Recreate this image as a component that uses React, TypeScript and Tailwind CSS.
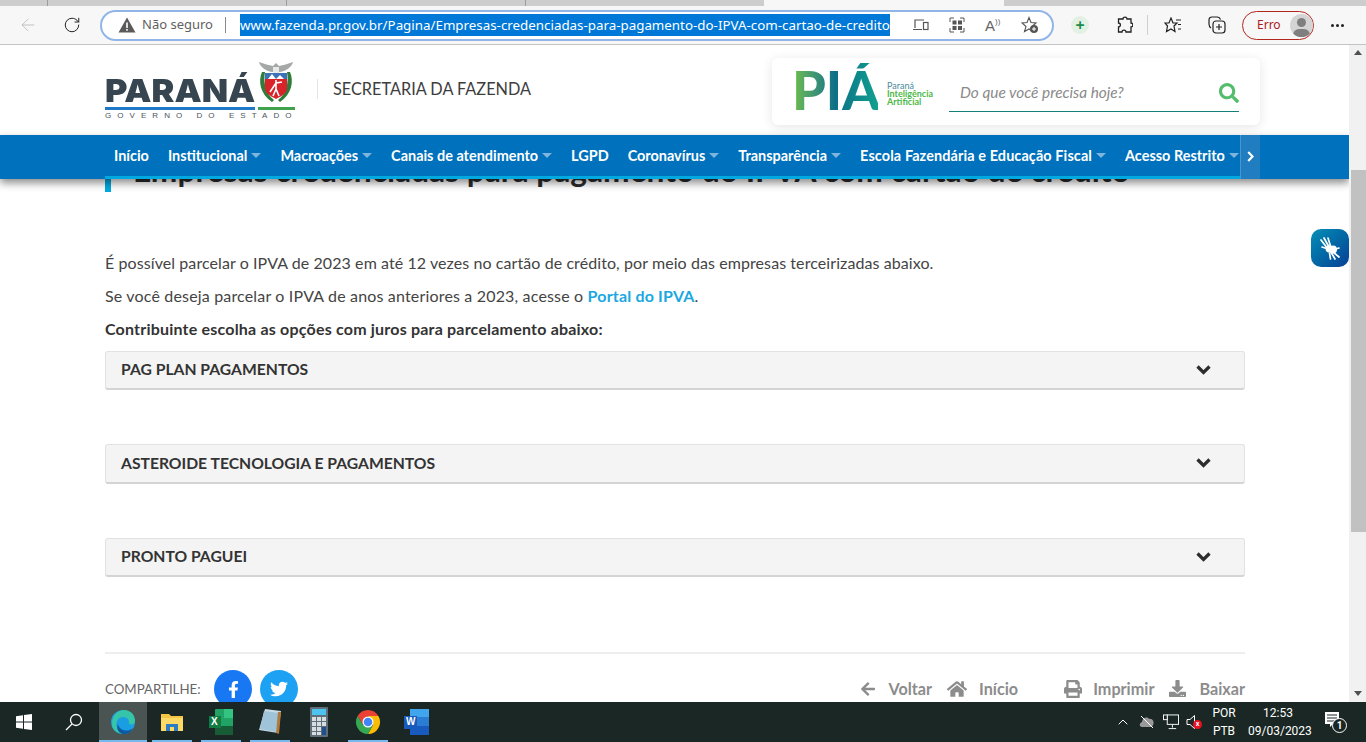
import { ArrowLeft, RotateCw, ChevronUp } from 'lucide-react';
import { FaSearch, FaArrowLeft, FaHome, FaPrint, FaDownload, FaFacebookF, FaTwitter } from 'react-icons/fa';

const navItems = [
  { label: 'Início', caret: false },
  { label: 'Institucional', caret: true },
  { label: 'Macroações', caret: true },
  { label: 'Canais de atendimento', caret: true },
  { label: 'LGPD', caret: false },
  { label: 'Coronavírus', caret: true },
  { label: 'Transparência', caret: true },
  { label: 'Escola Fazendária e Educação Fiscal', caret: true, wide: true },
  { label: 'Acesso Restrito', caret: true },
];

function CoatOfArms() {
  return (
    <svg width="36" height="42" viewBox="0 0 36 42">
      <path d="M1 1 C6 3 11 4 15 5 L18 2 L21 5 C25 4 30 3 35 1 C34 6 28 10 22 11 L14 11 C8 10 2 6 1 1Z" fill="#a4a9a8" />
      <path d="M15 6 H21 V12 H15Z" fill="#e8e8e8" />
      <path d="M4 11 C0 20 2 33 14 41 L16 39 C8 33 5 22 7 11Z" fill="#2f7d3a" />
      <path d="M32 11 C36 20 34 33 22 41 L20 39 C28 33 31 22 29 11Z" fill="#2f7d3a" />
      <path d="M7 12 H29 V27 C29 32 24 35 18 38 C12 35 7 32 7 27Z" fill="#d8232a" />
      <path d="M7 12 H29 V18 H7Z" fill="#3c73b8" />
      <path d="M10 18 L14 13 L18 18 L22 14 L26 18Z" fill="#fff" />
      <path d="M18 19 V28 M18 22 L12 31 M18 22 L24 21 M18 28 L15 35 M18 28 L21 35" stroke="#fff" strokeWidth="1.6" fill="none" />
    </svg>
  );
}

function TabStrip() {
  return (
    <div className="h-[6px] bg-[#cdcdcd] flex shrink-0">
      <div className="w-[48px] border-r border-[#9c9c9c]" />
      <div className="w-[239px] border-r border-[#9c9c9c]" />
      <div className="w-[239px] border-r border-[#9c9c9c]" />
      <div className="w-[238px] rounded-br-md" />
      <div className="w-[240px] bg-[#f7f7f7]" />
      <div className="flex-1 rounded-bl-md" />
    </div>
  );
}

function Toolbar() {
  return (
    <div className="h-[39px] bg-[#f7f7f7] border-b border-[#c4c4c4] flex items-center shrink-0 text-[#1f1f1f]">
      <div className="w-[56px] flex justify-center">
        <ArrowLeft size={20} strokeWidth={1} className="text-[#b8b8b8]" />
      </div>
      <div className="w-[32px] flex justify-center">
        <RotateCw size={18} strokeWidth={1.3} />
      </div>
      <div className="ml-[12px] w-[954px] h-[31px] rounded-full border-2 border-[#92b5e8] bg-white flex items-center pl-[16px]">
        <svg width="18" height="16" viewBox="0 0 18 16">
          <path d="M9 0.5 L17.5 15.5 H0.5Z" fill="#5a5a5a" />
          <rect x="8.2" y="5.5" width="1.6" height="5.5" fill="#fff" />
          <rect x="8.2" y="12" width="1.6" height="1.7" fill="#fff" />
        </svg>
        <span className="ml-[6px] text-[13px] text-[#5f5f5f] font-['Noto_Sans',sans-serif]">Não seguro</span>
        <div className="ml-[12px] w-px h-[16px] bg-[#8a8a8a]" />
        <span className="ml-[14px] h-[22px] w-[650px] bg-[#0078d7] text-white text-[13.35px] leading-[22px] whitespace-nowrap overflow-hidden font-['Noto_Sans',sans-serif]">
          www.fazenda.pr.gov.br/Pagina/Empresas-credenciadas-para-pagamento-do-IPVA-com-cartao-de-credito
        </span>
        <div className="ml-[23px] flex items-center gap-[20px] text-[#555]">
          <svg width="16" height="14" viewBox="0 0 16 14" fill="none" stroke="currentColor" strokeWidth="1.2">
            <path d="M2 10 V2 H11 M0 11.5 H9" />
            <rect x="10.5" y="4.5" width="4.5" height="7" />
          </svg>
          <svg width="16" height="16" viewBox="0 0 16 16" fill="currentColor">
            <path d="M1 5 V1 H5 M11 1 H15 V5 M15 11 V15 H11 M5 15 H1 V11" fill="none" stroke="currentColor" />
            <rect x="3.5" y="3.5" width="4" height="4" />
            <rect x="9" y="3.5" width="4" height="4" />
            <rect x="3.5" y="9" width="4" height="4" />
            <rect x="9" y="9" width="4" height="4" />
          </svg>
          <span className="w-[16px] text-[15px] leading-none font-['Liberation_Sans',sans-serif] text-[#666]">
            A<span className="text-[8px] align-top">))</span>
          </span>
          <svg width="18" height="18" viewBox="0 0 18 18" fill="none" stroke="currentColor" strokeWidth="1.1">
            <path d="M8 1.5 L10 6.5 L15 7 L11 10.5 L12 15.5 L8 13 L3.5 15.5 L5 10.5 L1 7 L6 6.5Z" />
            <circle cx="13" cy="13" r="4" fill="#555" stroke="none" />
            <path d="M13 11 V15 M11 13 H15" stroke="#fff" />
          </svg>
        </div>
      </div>
      <div className="ml-[17px] w-[18px] h-[18px] rounded-full bg-[#e3f1e4] flex items-center justify-center text-[#1a8a4a] font-bold text-[16px] leading-none">+</div>
      <svg className="ml-[28px]" width="16" height="18" viewBox="0 0 16 18" fill="none" stroke="#222" strokeWidth="1.3">
        <path d="M6 3 C6 0.5 10 0.5 10 3 H14 V7 C16.5 7 16.5 11 14 11 V16 H9 C9 13.5 5 13.5 5 16 H1.5 V11 C4 11 4 7 1.5 7 V3Z" />
      </svg>
      <div className="ml-[14px] w-px h-[20px] bg-[#cfcfcf]" />
      <svg className="ml-[16px]" width="18" height="17" viewBox="0 0 18 17" fill="none" stroke="#222" strokeWidth="1.2">
        <path d="M7 1 L9 6 H13 L10 9 L11 14.5 L7 12 L2.5 14.5 L3.5 9 L1 6 H5Z" />
        <path d="M12 3 H17 M14 7.5 H17 M14 12 H17" />
      </svg>
      <svg className="ml-[26px]" width="18" height="18" viewBox="0 0 18 18" fill="none" stroke="#222" strokeWidth="1.2">
        <rect x="5" y="5" width="12" height="12" rx="3" />
        <path d="M11 8 V14 M8 11 H14 M3 12 C1.5 11 1 10 1 8 V4 C1 2 2 1 4 1 H9 C11 1 12 2 12.5 3.5" />
      </svg>
      <div className="ml-[16px] w-[72px] h-[29px] rounded-full border border-[#b3261e] flex items-center pl-[14px] gap-[9px]">
        <span className="text-[12px] text-[#a81c1c] font-['Noto_Sans',sans-serif]">Erro</span>
        <div className="relative w-[23px] h-[23px] rounded-full bg-[#d4d4d4] overflow-hidden">
          <div className="absolute left-[7px] top-[4px] w-[9px] h-[9px] rounded-full bg-[#7f7f7f]" />
          <div className="absolute left-[3px] top-[15px] w-[17px] h-[12px] rounded-full bg-[#7f7f7f]" />
        </div>
      </div>
      <div className="ml-[17px] flex gap-[2px]">
        <i className="block w-[3px] h-[3px] rounded-full bg-[#222]" />
        <i className="block w-[3px] h-[3px] rounded-full bg-[#222]" />
        <i className="block w-[3px] h-[3px] rounded-full bg-[#222]" />
      </div>
    </div>
  );
}

function SiteHeader() {
  return (
    <div className="relative z-10 shrink-0">
      <div className="h-[90px] bg-white flex items-start pl-[105px]">
        <div className="w-[192px] h-[76px] mt-[16px] relative">
          <div className="font-['Inter',sans-serif] font-black text-[32px] leading-[32px] text-[#36454f] mt-[14px] whitespace-nowrap scale-x-[1.07] origin-left">
            PARANÁ
          </div>
          <div className="h-[3px] flex gap-[3px]">
            <div className="w-[150px] bg-[#1f78c8]" />
            <div className="w-[37px] bg-[#3fa34d]" />
          </div>
          <div className="text-[8px] leading-[10px] mt-[1px] tracking-[6.05px] text-[#4a555b] whitespace-nowrap font-['Liberation_Sans',sans-serif]">
            GOVERNO DO ESTADO
          </div>
          <div className="absolute left-[153px] top-[0px]">
            <CoatOfArms />
          </div>
        </div>
        <div className="ml-[20px] mt-[34px] h-[20px] border-l border-[#e4e4e4] pl-[15px] text-[16.3px] leading-[20px] text-[#3d3d3d] font-['Lato',sans-serif] whitespace-nowrap">
          SECRETARIA DA FAZENDA
        </div>
        <div className="ml-auto mr-[89px] mt-[13px] w-[488px] h-[67px] bg-white rounded-[6px] shadow-[0_2px_12px_rgba(0,0,0,0.1)] flex items-center pl-[20px]">
          <div className="w-[86px] font-['Lato',sans-serif] font-black text-[54px] leading-[54px] bg-linear-to-r from-[#6fbf44] via-[#0e6f86] to-[#11a08f] bg-clip-text text-transparent whitespace-nowrap mt-[-3px]">
            PIÁ
          </div>
          <div className="ml-[9px] w-[47px] text-[9px] leading-[8px] font-bold font-['Lato',sans-serif] whitespace-nowrap mt-[5px]">
            <div className="text-[#4c8a9c] font-normal">Paraná</div>
            <div className="text-[#4db848]">Inteligência</div>
            <div className="text-[#4db848]">Artificial</div>
          </div>
          <div className="ml-[15px] w-[290px] h-[40px] border-b border-[#157f7a] flex items-center justify-between pt-[3px]">
            <span className="ml-[11px] italic text-[15.4px] text-[#8a8a8a] font-['Lato',sans-serif]">Do que você precisa hoje?</span>
            <FaSearch size={20} className="text-[#54bd6b]" />
          </div>
        </div>
      </div>
      <nav className="h-[44px] bg-[#0071bc] relative shadow-[0_4px_8px_rgba(0,0,0,0.45)] flex pl-[114px]">
        <div className="absolute left-[105px] w-[1135px] bottom-0 h-[3px] bg-[#00a9e0]" />
        <ul className="flex items-center gap-[19px] h-[42px] text-white font-bold text-[14.45px] font-['Lato',sans-serif] whitespace-nowrap w-[1126px]">
          {navItems.map((n) => (
            <li key={n.label} className={n.wide ? 'flex items-center gap-[4px] tracking-[0.1px]' : 'flex items-center gap-[4px]'}>
              {n.label}
              {n.caret && <span className="w-0 h-0 border-x-[5px] border-x-transparent border-t-[5px] border-t-[#7fb5dc]" />}
            </li>
          ))}
        </ul>
        <div className="w-[20px] h-[44px] bg-[#1f7dc0] border-l border-[#4a95cb] flex items-start justify-center pt-[16px]">
          <svg width="7" height="11" viewBox="0 0 7 11" fill="none" stroke="#fff" strokeWidth="2.2">
            <path d="M1.2 1 L5.5 5.5 L1.2 10" />
          </svg>
        </div>
      </nav>
    </div>
  );
}

function AccordionRow({ title, className }: { title: string; className?: string }) {
  return (
    <div className={`rounded-[3px] bg-[#f4f4f4] border border-[#e2e2e2] border-b-2 border-b-[#d4d4d4] flex items-center justify-between pl-[15px] pr-[33px] ${className ?? ''}`}>
      <span className="font-bold text-[15.7px] text-[#333] font-['Lato',sans-serif]">{title}</span>
      <svg width="15" height="10" viewBox="0 0 15 10" fill="none" stroke="#2d2d2d" strokeWidth="3.2" className="mb-[1px]">
        <path d="M1.5 1.5 L7.5 7.5 L13.5 1.5" />
      </svg>
    </div>
  );
}

function Content() {
  return (
    <div className="ml-[105px] w-[1140px] mt-[-17px] font-['Lato',sans-serif]">
      <div className="flex items-start h-[30px]">
        <div className="w-[6px] h-[30px] bg-[#00a9e0]" />
        <h1 className="ml-[22px] mt-[-9px] text-[31.7px] leading-[34px] font-bold text-[#2b2b2b] whitespace-nowrap">
          Empresas credenciadas para pagamento do IPVA com cartão de crédito
        </h1>
      </div>
      <div className="mt-[61px] text-[16px] leading-[20px] text-[#444] flex flex-col gap-[13px]">
        <p className="tracking-[0.08px]">É possível parcelar o IPVA de 2023 em até 12 vezes no cartão de crédito, por meio das empresas terceirizadas abaixo.</p>
        <p className="tracking-[0.17px]">
          Se você deseja parcelar o IPVA de anos anteriores a 2023, acesse o <span className="font-bold text-[#1ba8e0]">Portal do IPVA</span>.
        </p>
        <p className="font-bold text-[#333] tracking-[0.2px]">Contribuinte escolha as opções com juros para parcelamento abaixo:</p>
      </div>
      <AccordionRow title="PAG PLAN PAGAMENTOS" className="mt-[12px] h-[39px]" />
      <AccordionRow title="ASTEROIDE TECNOLOGIA E PAGAMENTOS" className="mt-[54px] h-[40px]" />
      <AccordionRow title="PRONTO PAGUEI" className="mt-[54px] h-[39px]" />
      <div className="mt-[75px] h-[2px] bg-[#eeeeee]" />
      <div className="mt-[16px] flex items-center h-[38px]">
        <span className="w-[95px] mt-[1px] text-[13.3px] text-[#666] whitespace-nowrap">COMPARTILHE:</span>
        <div className="ml-[14px] w-[38px] h-[38px] rounded-full bg-[#1877f2] flex items-center justify-center text-white">
          <FaFacebookF size={17} />
        </div>
        <div className="ml-[8px] w-[38px] h-[38px] rounded-full bg-[#1da1f2] flex items-center justify-center text-white">
          <FaTwitter size={18} />
        </div>
        <div className="ml-auto flex items-center text-[#8c8c8c] font-bold text-[16.2px]">
          <FaArrowLeft size={16} />
          <span className="ml-[12px]">Voltar</span>
          <FaHome size={20} className="ml-[15px]" />
          <span className="ml-[12px]">Início</span>
          <FaPrint size={18} className="ml-[46px]" />
          <span className="ml-[11px]">Imprimir</span>
          <FaDownload size={17} className="ml-[15px]" />
          <span className="ml-[13px]">Baixar</span>
        </div>
      </div>
    </div>
  );
}

function Scrollbar() {
  return (
    <div className="w-[17px] bg-[#f1f1f1] flex flex-col items-center shrink-0">
      <div className="h-[125px] w-full flex justify-center pt-[5px]">
        <span className="w-0 h-0 border-x-[4px] border-x-transparent border-b-[5px] border-b-[#505050]" />
      </div>
      <div className="ml-[2px] w-[15px] h-[362px] bg-[#c1c1c1]" />
      <div className="flex-1" />
      <span className="mb-[6px] w-0 h-0 border-x-[4px] border-x-transparent border-t-[5px] border-t-[#505050]" />
    </div>
  );
}

function Taskbar() {
  const slot = 'w-[49px] h-[40px] flex items-center justify-center relative';
  const bar = 'absolute bottom-0 left-[5px] right-[4px] h-[2px] bg-[#76b9ed]';
  return (
    <div className="h-[40px] bg-[#1a2724] flex items-center shrink-0 text-white font-['Roboto',sans-serif]">
      <div className="w-[48px] h-[40px] flex items-center justify-center">
        <svg width="16" height="16" viewBox="0 0 16 16" fill="#fff">
          <path d="M0 2.3 L7 1.3 V7.5 H0Z M8 1.1 L16 0 V7.5 H8Z M0 8.5 H7 V14.7 L0 13.7Z M8 8.5 H16 V16 L8 14.9Z" />
        </svg>
      </div>
      <div className="w-[51px] h-[40px] flex items-center justify-center">
        <svg width="18" height="18" viewBox="0 0 18 18" fill="none" stroke="#fff" strokeWidth="1.3">
          <circle cx="11" cy="7" r="5.5" />
          <path d="M7 11 L1 17" />
        </svg>
      </div>
      <div className="w-[48px] h-[40px] bg-[#4a5452] flex items-center justify-center relative">
        <svg width="26" height="26" viewBox="0 0 26 26">
          <circle cx="13" cy="13" r="12" fill="#1b9de2" />
          <path d="M2 15 C2 6 8 1 14 1 C21 1 25 6 25 12 C25 15 22 16 19 15 C20 11 17 8 13 8 C8 8 5 13 7 18 C8 21 11 24 15 25 C7 25 2 21 2 15Z" fill="#36c5a8" />
          <path d="M8 15 C9 21 17 24 23 19 C21 24 16 25.5 13 25 C8 24 6 19 8 15Z" fill="#0c59a4" />
        </svg>
        <div className="absolute bottom-0 left-0 right-0 h-[2px] bg-[#76b9ed]" />
      </div>
      <div className={slot}>
        <svg width="22" height="22" viewBox="0 0 22 22">
          <path d="M0 3 H8 L10 5 H22 V20 H0Z" fill="#f5c544" />
          <path d="M0 7 H22 V20 H0Z" fill="#ffd966" />
          <path d="M5 13 H17 V20 H13 V16 H9 V20 H5Z" fill="#2c7cc4" />
        </svg>
        <div className={bar} />
      </div>
      <div className={slot}>
        <svg width="24" height="28" viewBox="0 0 24 28">
          <rect x="6" y="1" width="18" height="26" rx="1" fill="#21a366" />
          <rect x="15" y="1" width="9" height="9" fill="#33c481" />
          <rect x="6" y="18" width="18" height="9" fill="#185c37" />
          <rect x="0" y="8" width="12" height="12" fill="#107c41" />
        </svg>
        <span className="absolute left-[15px] top-[12px] text-[10px] font-bold leading-[16px] font-['Liberation_Sans',sans-serif]">X</span>
        <div className={bar} />
      </div>
      <div className={slot}>
        <svg width="24" height="28" viewBox="0 0 24 28">
          <path d="M7 1 L23 3 L20 25 L1 22Z" fill="#c8dbe8" />
          <path d="M6 3 L21 5 L18 24 L2 21Z" fill="#9fc3d8" />
          <path d="M20 4 L23 4 L21 26 L18 25Z" fill="#b07a3c" />
        </svg>
        <div className={bar} />
      </div>
      <div className={slot}>
        <svg width="18" height="30" viewBox="0 0 18 30">
          <rect width="18" height="30" rx="1" fill="#5f6f7a" />
          <rect x="2" y="2" width="14" height="6" fill="#4fc3f0" />
          <path d="M2 10 h4 v4 h-4Z M7 10 h4 v4 h-4Z M12 10 h4 v4 h-4Z M2 15 h4 v4 h-4Z M7 15 h4 v4 h-4Z M12 15 h4 v4 h-4Z M2 20 h4 v4 h-4Z M7 20 h4 v4 h-4Z M2 25 h4 v3 h-4Z M7 25 h4 v3 h-4Z" fill="#d7dde1" />
          <rect x="12" y="20" width="4" height="8" fill="#1f4f8f" />
        </svg>
      </div>
      <div className={slot}>
        <svg width="26" height="26" viewBox="0 0 26 26">
          <path d="M2.6 7 A12 12 0 0 1 23.4 7 H13 L8 16Z" fill="#ea4335" />
          <path d="M23.4 7 A12 12 0 0 1 13 25 L18 16 L13 7Z" fill="#fbbc05" />
          <path d="M13 25 A12 12 0 0 1 2.6 7 L8 16 L18 16Z" fill="#34a853" />
          <circle cx="13" cy="13" r="5.5" fill="#fff" />
          <circle cx="13" cy="13" r="4.3" fill="#4285f4" />
        </svg>
        <div className={bar} />
      </div>
      <div className={slot}>
        <svg width="25" height="28" viewBox="0 0 25 28">
          <rect x="6" y="1" width="19" height="26" rx="1" fill="#2b7cd3" />
          <rect x="6" y="1" width="19" height="8" fill="#41a5ee" />
          <rect x="6" y="18" width="19" height="9" fill="#185abd" />
          <rect x="0" y="8" width="13" height="13" fill="#185abd" />
        </svg>
        <span className="absolute left-[14px] top-[12px] text-[10px] font-bold leading-[16px] font-['Liberation_Sans',sans-serif]">W</span>
      </div>
      <div className="flex-1" />
      <div className="flex items-center gap-[8px]">
        <ChevronUp size={16} strokeWidth={1.5} />
        <svg width="16" height="14" viewBox="0 0 16 14">
          <path d="M3 12 C0 12 0 8 3 7 C3 3 8 1 10 4 C13 3 16 7 14 10 L13 12Z" fill="#9a9a9a" />
          <path d="M2 1 L14 13" stroke="#fff" strokeWidth="1" />
        </svg>
        <svg width="16" height="16" viewBox="0 0 17 16" fill="none" stroke="#fff">
          <rect x="4.5" y="0.5" width="12" height="10" />
          <rect x="0.5" y="0.5" width="4" height="5" fill="#1a2724" />
          <path d="M10 11 V14 M6 15 H14" />
        </svg>
        <div className="relative w-[14px] h-[16px] ml-[-1px]">
          <svg width="10" height="16" viewBox="0 0 10 16" fill="none" stroke="#fff">
            <path d="M1 5.5 H4 L8.5 1.5 V14.5 L4 10.5 H1Z" />
          </svg>
          <span className="absolute left-[7px] top-[6px] w-[9px] h-[9px] rounded-full bg-[#e81123] text-[7px] leading-[9px] text-center font-bold">x</span>
        </div>
      </div>
      <div className="ml-[9px] w-[30px] text-[12px] leading-[18px] text-center">
        <div>POR</div>
        <div>PTB</div>
      </div>
      <div className="w-[60px] ml-[9px] text-[12px] leading-[18px] text-center">
        <div>12:53</div>
        <div>09/03/2023</div>
      </div>
      <div className="relative w-[20px] h-[20px] ml-[15px] mr-[23px] pl-[2px]">
        <svg width="14" height="16" viewBox="0 0 14 16" fill="#fff">
          <path d="M0 0 H14 V12 H8 L5 15 V12 H0Z" />
          <path d="M2 3 H12 M2 6 H12 M2 9 H9" stroke="#1a2724" />
        </svg>
        <span className="absolute left-[9px] top-[6px] w-[15px] h-[15px] rounded-full bg-[#1a2724] border border-white text-[10px] leading-[13px] text-center font-bold">1</span>
      </div>
    </div>
  );
}

export default function App() {
  return (
    <div className="w-[1366px] h-[742px] overflow-hidden flex flex-col bg-white">
      <TabStrip />
      <Toolbar />
      <div className="flex-1 min-h-0 flex relative">
        <div className="flex-1 min-w-0 overflow-hidden relative">
          <SiteHeader />
          <Content />
          <div className="absolute right-0 top-[184px] w-[38px] h-[38px] rounded-[10px] bg-linear-to-br from-[#0b8fb5] to-[#0a3f94] flex items-center justify-center">
            <svg width="24" height="24" viewBox="0 0 24 24" fill="none" stroke="#fff" strokeWidth="1.7" strokeLinecap="round">
              <path d="M10 13 L3 4 M11 11 L6 2 M12.5 10 L10 2 M10 13 L4 11" />
              <path d="M14 14 L21 12 M15 16 L21 21 M13.5 17 L17 23 M11.5 17 L12.5 23" />
              <circle cx="11" cy="13" r="3.4" fill="#fff" stroke="none" />
              <circle cx="15" cy="13.5" r="4" fill="#fff" stroke="none" />
            </svg>
          </div>
        </div>
        <Scrollbar />
      </div>
      <Taskbar />
    </div>
  );
}
